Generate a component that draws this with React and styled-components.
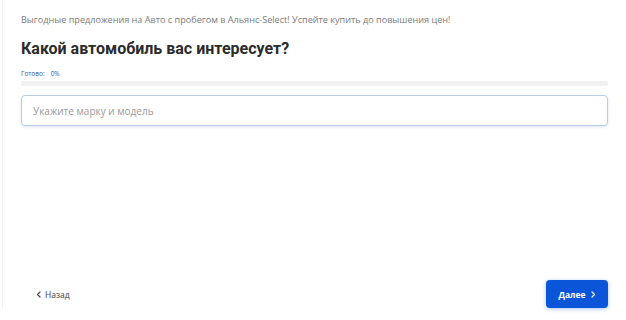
import React from 'react';
import styled, { createGlobalStyle } from 'styled-components';

const Global = createGlobalStyle`
  html, body { margin: 0; padding: 0; background: #fff; }
  body { font-family: "Open Sans", "Noto Sans", sans-serif; }
`;

const Page = styled.div`
  width: 626px;
  height: 320px;
  box-sizing: border-box;
  padding: 0 0 12px 2px;
  display: flex;
`;

const Card = styled.div`
  flex: 1;
  border-left: 1px solid #f1f1f1;
  padding: 0 18px 0 18px;
  display: flex;
  flex-direction: column;
`;

const Promo = styled.p`
  margin: 13px 0 0;
  font-size: 9.1px;
  line-height: 14px;
  color: #7a7a7a;
`;

const Title = styled.h1`
  margin: 11px 0 0;
  font-family: Roboto, "Open Sans", sans-serif;
  font-size: 16px;
  line-height: 22px;
  font-weight: 700;
  color: #2b2b2b;
`;

const Progress = styled.div`
  margin-top: 10px;
  display: flex;
  flex-direction: column;
  gap: 3px;
`;

const Label = styled.div`
  font-size: 6.5px;
  line-height: 8px;
  color: #3c5a8a;
  display: flex;
  gap: 6px;
  span { color: #1a5ad0; }
`;

const Track = styled.div`
  height: 5px;
  background: #f1f1f1;
  border-radius: 2px;
`;

const Input = styled.input`
  margin-top: 9px;
  height: 31px;
  box-sizing: border-box;
  border: 1px solid #b9cde8;
  border-radius: 4px;
  box-shadow: 0 1px 3px rgba(120, 150, 200, 0.25);
  padding: 0 11px;
  font-family: inherit;
  font-size: 10px;
  color: #333;
  outline: none;
  &::placeholder { color: #9a9a9a; }
`;

const Footer = styled.div`
  margin-top: auto;
  display: flex;
  justify-content: space-between;
  align-items: center;
`;

const Back = styled.button`
  background: none;
  border: none;
  padding: 0 0 0 15px;
  font-family: inherit;
  font-size: 8.5px;
  color: #444;
  display: flex;
  align-items: center;
  gap: 4px;
`;

const Next = styled.button`
  width: 62px;
  height: 28px;
  background: #0a55d8;
  border: none;
  border-radius: 4px;
  box-shadow: 0 1px 4px rgba(10, 85, 216, 0.35);
  color: #fff;
  font-family: inherit;
  font-weight: 700;
  font-size: 8.5px;
  display: flex;
  align-items: center;
  justify-content: center;
  gap: 5px;
`;

const Chevron = ({ dir }) => (
  <svg width="5" height="7" viewBox="0 0 5 7" fill="none">
    <path
      d={dir === 'left' ? 'M4 1L1.5 3.5L4 6' : 'M1 1L3.5 3.5L1 6'}
      stroke="currentColor"
      strokeWidth="1.2"
      strokeLinecap="round"
      strokeLinejoin="round"
    />
  </svg>
);

export default function App() {
  return (
    <Page>
      <Global />
      <Card>
        <Promo>Выгодные предложения на Авто с пробегом в Альянс-Select! Успейте купить до повышения цен!</Promo>
        <Title>Какой автомобиль вас интересует?</Title>
        <Progress>
          <Label>Готово: <span>0%</span></Label>
          <Track />
        </Progress>
        <Input placeholder="Укажите марку и модель" />
        <Footer>
          <Back><Chevron dir="left" />Назад</Back>
          <Next>Далее<Chevron dir="right" /></Next>
        </Footer>
      </Card>
    </Page>
  );
}
